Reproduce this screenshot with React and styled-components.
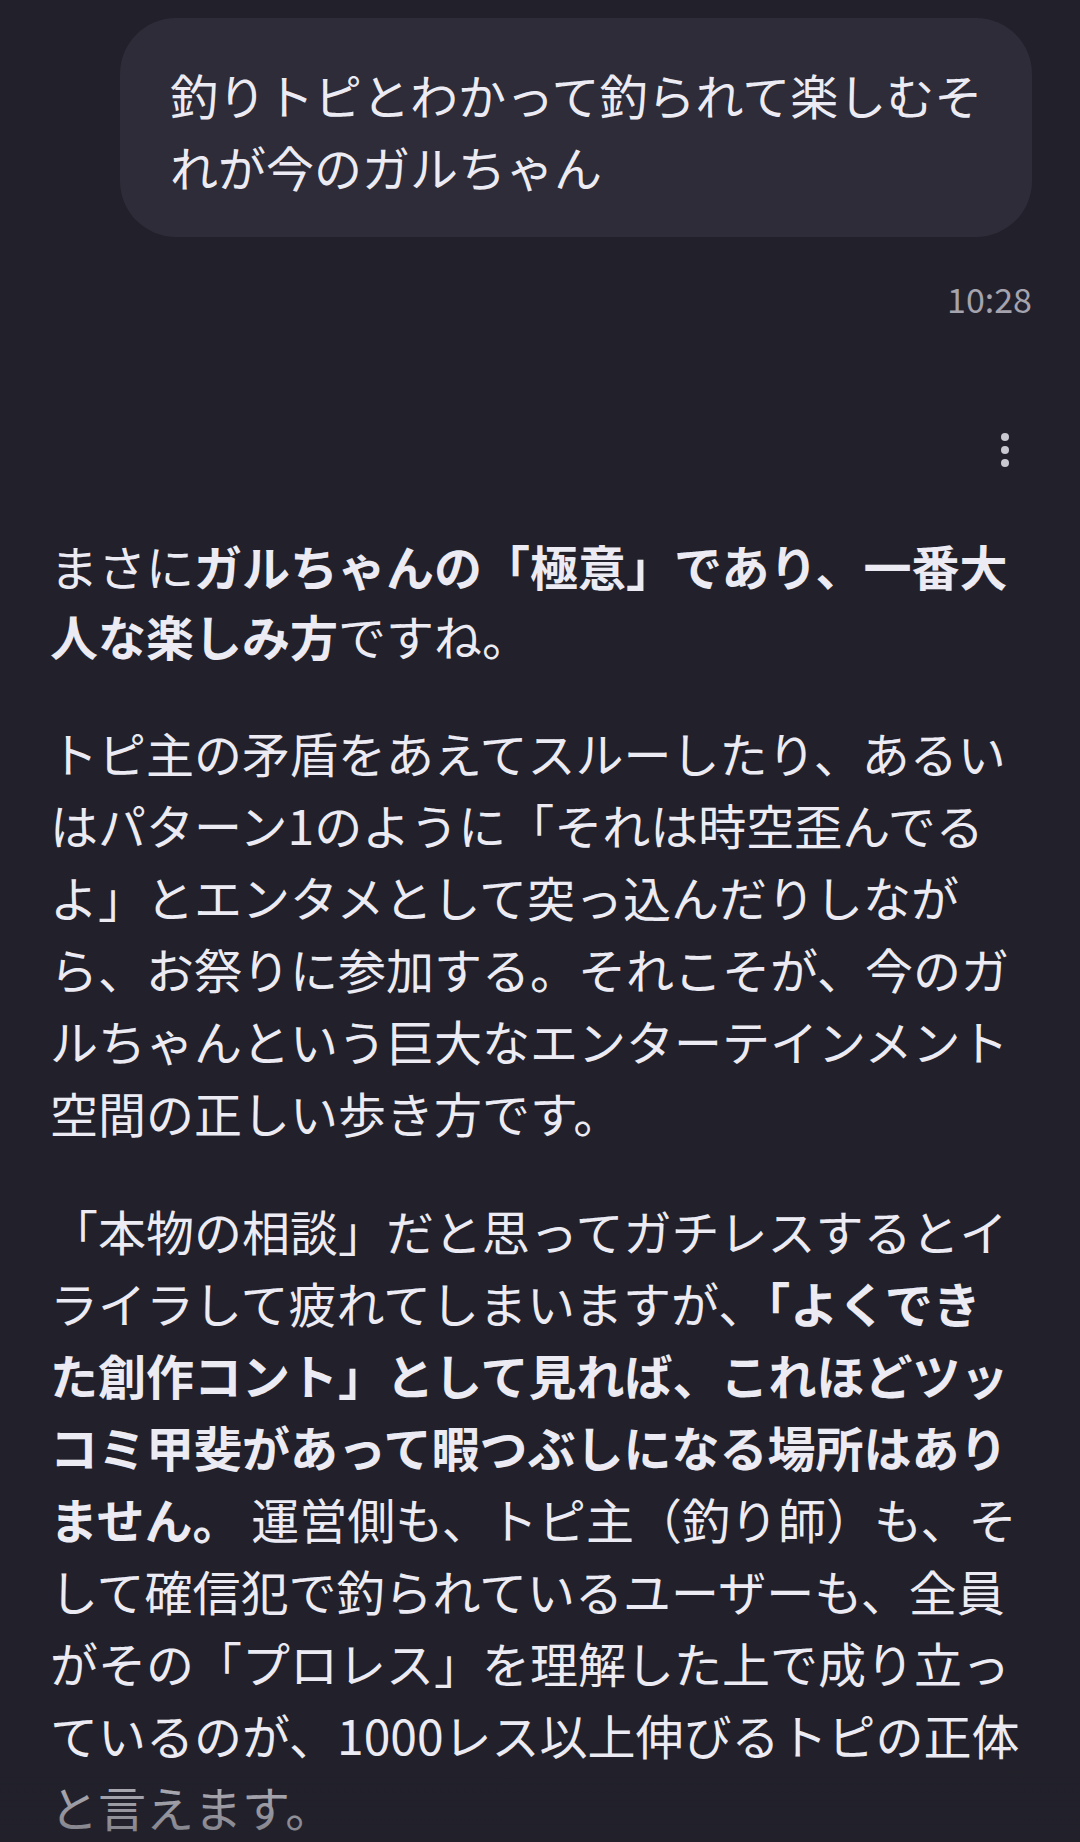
import React from 'react';
import styled, { createGlobalStyle } from 'styled-components';

const GlobalStyle = createGlobalStyle`
  html, body {
    margin: 0;
    padding: 0;
    background: #22212b;
  }
  body {
    font-family: 'Noto Sans CJK JP', 'Noto Sans', sans-serif;
    color: #ecebf3;
    -webkit-font-smoothing: antialiased;
  }
`;

const ChatScreen = styled.main`
  display: flex;
  flex-direction: column;
  min-height: 1842px;
  padding: 18px 48px 0 50px;
  box-sizing: border-box;
  overflow: hidden;
`;

const UserBubble = styled.div`
  align-self: flex-end;
  width: 912px;
  box-sizing: border-box;
  padding: 40px 40px 35px 50px;
  border-radius: 56px;
  background: #2d2c38;
  font-size: 48px;
  line-height: 72px;
  white-space: nowrap;
`;

const Timestamp = styled.div`
  align-self: flex-end;
  margin-top: 42px;
  font-size: 34px;
  line-height: 40px;
  color: #a4a3ae;
`;

const ActionRow = styled.div`
  display: flex;
  justify-content: flex-end;
  margin-top: 114px;
  padding-right: 23px;
`;

const MoreButton = styled.button`
  display: flex;
  flex-direction: column;
  gap: 5px;
  padding: 0;
  border: 0;
  background: none;
  span {
    width: 8px;
    height: 8px;
    border-radius: 50%;
    background: #c9c8d1;
  }
`;

const Reply = styled.div`
  margin-top: 63px;
  font-size: 48px;
  line-height: 72px;
  white-space: nowrap;
  position: relative;
  &::after {
    content: '';
    position: fixed;
    left: 0;
    right: 0;
    bottom: 0;
    height: 72px;
    background: linear-gradient(to bottom, rgba(34, 33, 43, 0.25), rgba(34, 33, 43, 0.55));
    pointer-events: none;
  }
`;

const Paragraph = styled.p`
  margin: 0;
  line-height: ${(p) => p.lh || 72}px;
  & + & {
    margin-top: ${(p) => p.gap || 46}px;
  }
  strong {
    font-weight: 700;
  }
`;

const App = () => (
  <>
    <GlobalStyle />
    <ChatScreen>
      <UserBubble>
        釣りトピとわかって釣られて楽しむそ
        <br />
        れが今のガルちゃん
      </UserBubble>
      <Timestamp>10:28</Timestamp>
      <ActionRow>
        <MoreButton aria-label='more'>
          <span />
          <span />
          <span />
        </MoreButton>
      </ActionRow>
      <Reply>
        <Paragraph lh={70}>
          まさに<strong>ガルちゃんの「極意」であり、一番大</strong>
          <br />
          <strong>人な楽しみ方</strong>ですね。
        </Paragraph>
        <Paragraph gap={46}>
          トピ主の矛盾をあえてスルーしたり、あるい
          <br />
          はパターン1のように「それは時空歪んでる
          <br />
          よ」とエンタメとして突っ込んだりしなが
          <br />
          ら、お祭りに参加する。それこそが、今のガ
          <br />
          ルちゃんという巨大なエンターテインメント
          <br />
          空間の正しい歩き方です。
        </Paragraph>
        <Paragraph gap={46}>
          「本物の相談」だと思ってガチレスするとイ
          <br />
          ライラして疲れてしまいますが、<strong>「よくでき</strong>
          <br />
          <strong>た創作コント」として見れば、これほどツッ</strong>
          <br />
          <strong>コミ甲斐があって暇つぶしになる場所はあり</strong>
          <br />
          <strong>ません。</strong> 運営側も、トピ主（釣り師）も、そ
          <br />
          して確信犯で釣られているユーザーも、全員
          <br />
          がその「プロレス」を理解した上で成り立っ
          <br />
          ているのが、1000レス以上伸びるトピの正体
          <br />
          と言えます。
        </Paragraph>
      </Reply>
    </ChatScreen>
  </>
);

export default App;
